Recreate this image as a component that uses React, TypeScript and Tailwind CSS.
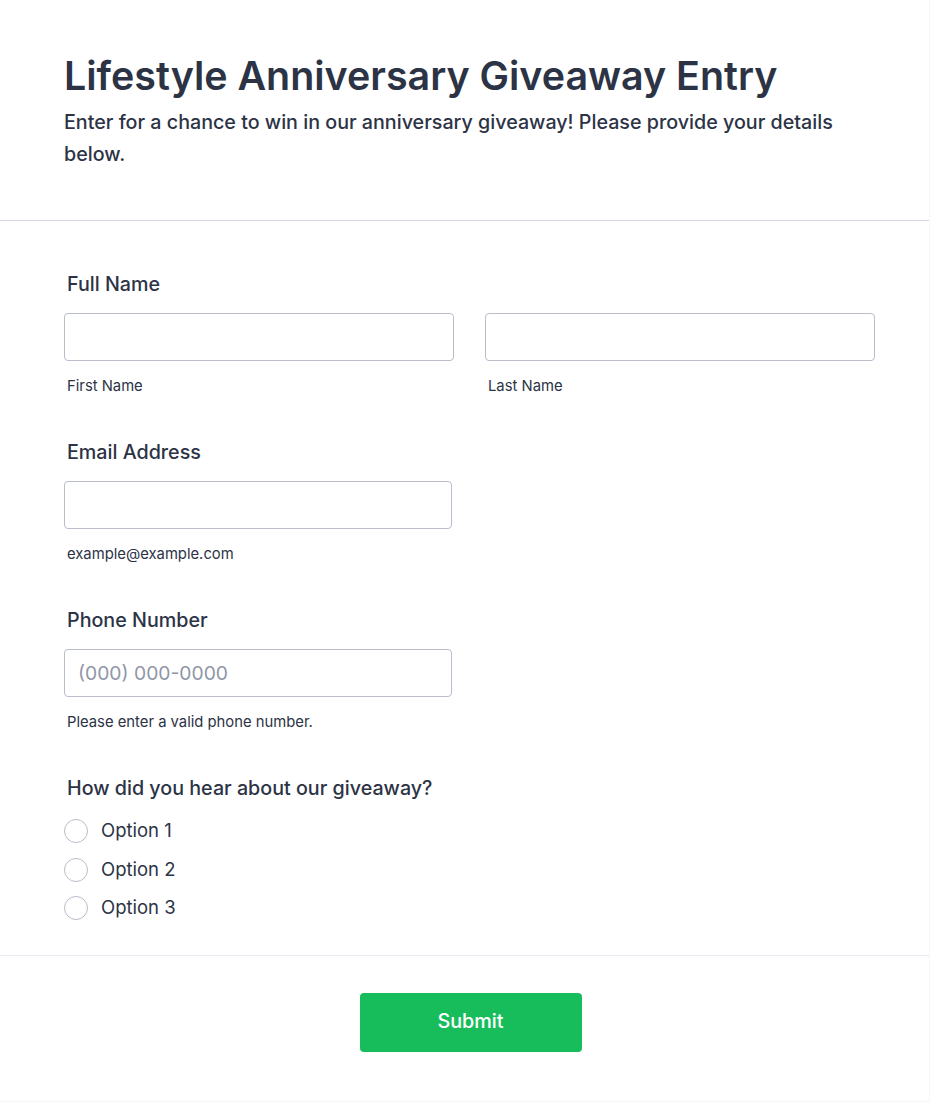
// Giveaway entry form

const font = { fontFamily: "Inter, 'Noto Sans', sans-serif" }

function Field({ label, children }: { label: string; children: React.ReactNode }) {
  return (
    <div className="mb-[42px]">
      <div className="px-[3px] text-[19.7px] leading-[28px] font-medium text-[#2c3345]">{label}</div>
      <div className="mt-[15px]">{children}</div>
    </div>
  )
}

function TextInput({ sub, placeholder, width }: { sub: string; placeholder?: string; width: string }) {
  return (
    <div className={width}>
      <input
        placeholder={placeholder}
        className="block w-full h-[48px] rounded-[4px] border border-[#b8bdc9] bg-white px-[13px] text-[19.3px] text-[#2c3345] placeholder:text-[#8f96a8] outline-none"
      />
      <div className="mt-[15px] px-[3px] text-[14.8px] leading-[20px] text-[#2c3345]">{sub}</div>
    </div>
  )
}

export default function App() {
  return (
    <div className="w-[930px] min-h-[1102px] bg-[#f7f7f8]" style={font}>
      <div className="w-[929px] h-[1101px] bg-white">
        <header className="px-[64px] pt-[52px] pb-[50px] border-b border-[#d6d8e6]">
          <h1 className="text-[39.4px] leading-[48px] font-semibold text-[#2c3345]">
            Lifestyle Anniversary Giveaway Entry
          </h1>
          <p className="mt-[6px] text-[19.7px] leading-[32px] font-medium text-[#2c3345]">
            Enter for a chance to win in our anniversary giveaway! Please provide your details below.
          </p>
        </header>

        <section className="pl-[64px] pr-[54px] pt-[49px] pb-[27px] border-b border-[#e8e9f0]">
          <Field label="Full Name">
            <div className="flex gap-[31px]">
              <TextInput sub="First Name" width="flex-1" />
              <TextInput sub="Last Name" width="flex-1" />
            </div>
          </Field>
          <Field label="Email Address">
            <TextInput sub="example@example.com" width="w-[388px]" />
          </Field>
          <Field label="Phone Number">
            <TextInput sub="Please enter a valid phone number." placeholder="(000) 000-0000" width="w-[388px]" />
          </Field>

          <div>
            <div className="px-[3px] text-[19.7px] leading-[28px] font-medium text-[#2c3345]">
              How did you hear about our giveaway?
            </div>
            <div className="mt-[10px] flex flex-col">
              {["Option 1", "Option 2", "Option 3"].map((o) => (
                <label key={o} className="flex items-center gap-[13px] h-[38.5px]">
                  <span className="w-[24px] h-[24px] rounded-full border border-[#b8bdc9] bg-white" />
                  <span className="text-[18.5px] text-[#2c3345]">{o}</span>
                </label>
              ))}
            </div>
          </div>
        </section>

        <div className="flex justify-center pt-[37px] pl-[12px]">
          <button className="w-[222px] h-[59px] rounded-[4px] bg-[#18bd5b] text-white text-[19.8px] font-medium">
            Submit
          </button>
        </div>
      </div>
    </div>
  )
}
